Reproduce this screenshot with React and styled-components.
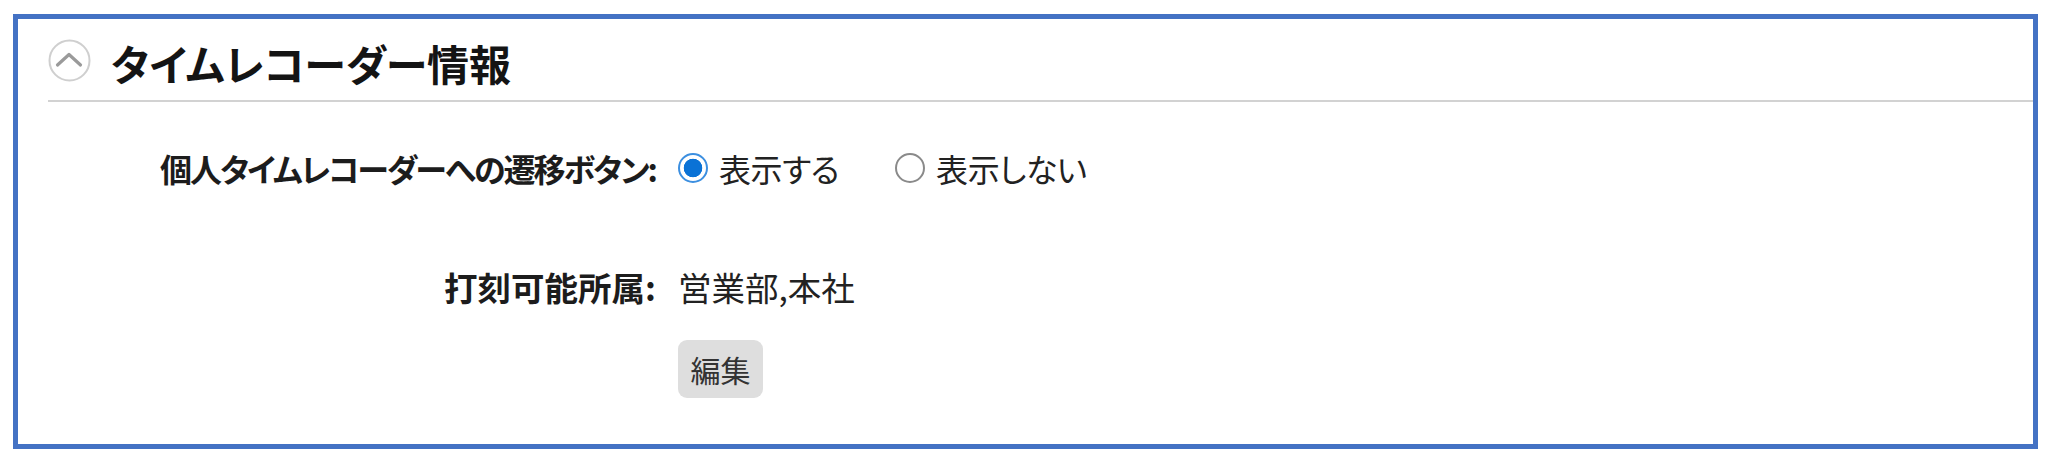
import React from "react";
import styled, { createGlobalStyle } from "styled-components";

const Global = createGlobalStyle`
  html, body { margin: 0; padding: 0; background: #ffffff; }
  body {
    font-family: "Noto Sans CJK JP", "Noto Sans", sans-serif;
    font-feature-settings: "palt";
    color: #222;
  }
`;

const Page = styled.div`
  padding: 14px 10px 12px 13px;
`;

const Panel = styled.section`
  border: 5px solid #4472c4;
  box-sizing: border-box;
  height: 435px;
  display: flex;
  flex-direction: column;
`;

const Header = styled.header`
  display: flex;
  align-items: center;
  gap: 20px;
  margin-left: 30px;
  height: 83px;
  padding-top: 2px;
  box-sizing: border-box;
  border-bottom: 2px solid #d2d2d2;
`;

const Title = styled.h2`
  margin: 0;
  padding-top: 5px;
  font-size: 42px;
  font-weight: 700;
  color: #141414;
  line-height: 1;
`;

const Form = styled.div`
  display: grid;
  grid-template-columns: 638px 1fr;
  column-gap: 22px;
  align-items: center;
  padding-top: 46px;
`;

const Label = styled.div`
  text-align: right;
  font-size: ${(p) => p.$size || 32}px;
  font-weight: 700;
  line-height: 40px;
  color: #1c1c1c;
  letter-spacing: ${(p) => p.$spacing || 0}px;
  margin-top: ${(p) => p.$top || 0}px;
`;

const Value = styled.div`
  display: flex;
  align-items: center;
  font-size: ${(p) => p.$size || 32}px;
  line-height: 40px;
  color: #222;
  margin-top: ${(p) => p.$top || 0}px;
`;

const RadioLabel = styled.label`
  display: inline-flex;
  align-items: center;
  gap: 11px;
  margin-right: 56px;
  letter-spacing: -0.4px;
`;

const Radio = styled.input.attrs({ type: "radio" })`
  appearance: none;
  margin: 0;
  width: 30px;
  height: 30px;
  border-radius: 50%;
  box-sizing: border-box;
  border: 2px solid ${(p) => (p.checked ? "#3c8fe0" : "#8a8a8a")};
  background: ${(p) =>
    p.checked
      ? "radial-gradient(circle, #0a72d6 0 9px, #ffffff 9.6px)"
      : "#ffffff"};
`;

const ButtonCell = styled.div`
  grid-column: 2;
  margin-top: 33px;
`;

const EditButton = styled.button`
  font-family: inherit;
  font-feature-settings: "palt";
  font-size: 30px;
  color: #333;
  background: #dedede;
  border: none;
  border-radius: 9px;
  width: 85px;
  height: 58px;
  padding: 0;
`;

const ToggleIcon = () => (
  <svg width="43" height="43" viewBox="0 0 43 43">
    <circle cx="21.5" cy="21.5" r="20" fill="#fff" stroke="#cfcfcf" strokeWidth="2" />
    <path d="M9.5 26 L21 15.5 L32.5 26" fill="none" stroke="#9a9a9a" strokeWidth="3.2" strokeLinecap="round" strokeLinejoin="round" />
  </svg>
);

export default function App() {
  return (
    <Page>
      <Global />
      <Panel>
        <Header>
          <ToggleIcon />
          <Title>タイムレコーダー情報</Title>
        </Header>
        <Form>
          <Label $spacing={-2}>個人タイムレコーダーへの遷移ボタン:</Label>
          <Value>
            <RadioLabel>
              <Radio name="show" checked readOnly />
              表示する
            </RadioLabel>
            <RadioLabel>
              <Radio name="show" checked={false} readOnly />
              表示しない
            </RadioLabel>
          </Value>
          <Label $size={33.5} $top={79}>打刻可能所属:</Label>
          <Value $size={33.5} $top={79}>営業部,本社</Value>
          <ButtonCell>
            <EditButton>編集</EditButton>
          </ButtonCell>
        </Form>
      </Panel>
    </Page>
  );
}
